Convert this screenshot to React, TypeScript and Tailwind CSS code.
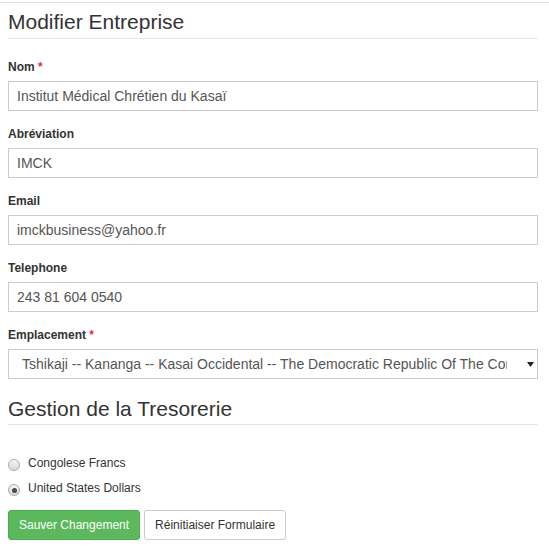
import React from "react";

function Label({ text, required }: { text: string; required?: boolean }) {
  return (
    <div className="h-[16px] text-[12px] leading-[16px] font-bold text-[#333]">
      {text}
      {required && <span className="text-[#e0322f] font-bold"> *</span>}
    </div>
  );
}

function Input({ value }: { value: string }) {
  return (
    <div className="mt-[6px] h-[30px] border border-[#ccc] bg-white pl-[8px] text-[14px] leading-[28px] text-[#555] whitespace-nowrap overflow-hidden">
      {value}
    </div>
  );
}

function Radio({ checked, label }: { checked?: boolean; label: string }) {
  return (
    <div className="flex items-start h-[16px]">
      <div className="mt-[4px] w-[12px] h-[12px] rounded-full border border-[#a9a9a9] bg-gradient-to-b from-[#f6f6f6] to-[#d9d9d9] flex items-center justify-center shrink-0">
        {checked && <div className="w-[5px] h-[5px] rounded-full bg-[#4a4a4a]" />}
      </div>
      <span className="ml-[8px] text-[12px] leading-[16px] text-[#333]">{label}</span>
    </div>
  );
}

export default function App() {
  return (
    <div className="w-[549px] h-[557px] bg-white overflow-hidden" style={{ fontFamily: '"Liberation Sans", Arial, sans-serif' }}>
      <div className="h-[3px] border-b border-[#dedede]" />
      <div className="ml-[8px] w-[530px]">
        <div className="pt-[7px] pb-[4px] border-b border-[#e5e5e5] text-[21px] leading-[24px] text-[#333]">
          Modifier Entreprise
        </div>

        <div className="mt-[20px]">
          <Label text="Nom" required />
          <Input value="Institut Médical Chrétien du Kasaï" />
        </div>
        <div className="mt-[15px]">
          <Label text="Abréviation" />
          <Input value="IMCK" />
        </div>
        <div className="mt-[15px]">
          <Label text="Email" />
          <Input value="imckbusiness@yahoo.fr" />
        </div>
        <div className="mt-[15px]">
          <Label text="Telephone" />
          <Input value="243 81 604 0540" />
        </div>
        <div className="mt-[15px]">
          <Label text="Emplacement" required />
          <div className="mt-[6px] h-[30px] border border-[#ccc] bg-white flex items-center">
            <div className="ml-[13px] w-[485px] overflow-hidden whitespace-nowrap text-[14px] leading-[28px] text-[#555]">
              Tshikaji -- Kananga -- Kasai Occidental -- The Democratic Republic Of The Congo
            </div>
            <svg className="ml-[20px]" width="7" height="5" viewBox="0 0 7 5">
              <path d="M0 0 H7 L3.5 5 Z" fill="#222" />
            </svg>
          </div>
        </div>

        <div className="mt-[18px] pb-[3px] border-b border-[#e5e5e5] text-[21px] leading-[24px] text-[#333]">
          Gestion de la Tresorerie
        </div>

        <div className="mt-[30px] flex flex-col gap-[9px]">
          <Radio label="Congolese Francs" />
          <Radio checked label="United States Dollars" />
        </div>

        <div className="mt-[14px] flex gap-[4px]">
          <button className="h-[30px] px-[10px] rounded-[3px] border border-[#4cae4c] bg-[#5cb85c] text-white text-[12px] leading-[28px]">
            Sauver Changement
          </button>
          <button className="h-[30px] px-[10px] rounded-[3px] border border-[#ccc] bg-white text-[#333] text-[12px] leading-[28px]">
            Réinitiaiser Formulaire
          </button>
        </div>
      </div>
    </div>
  );
}
